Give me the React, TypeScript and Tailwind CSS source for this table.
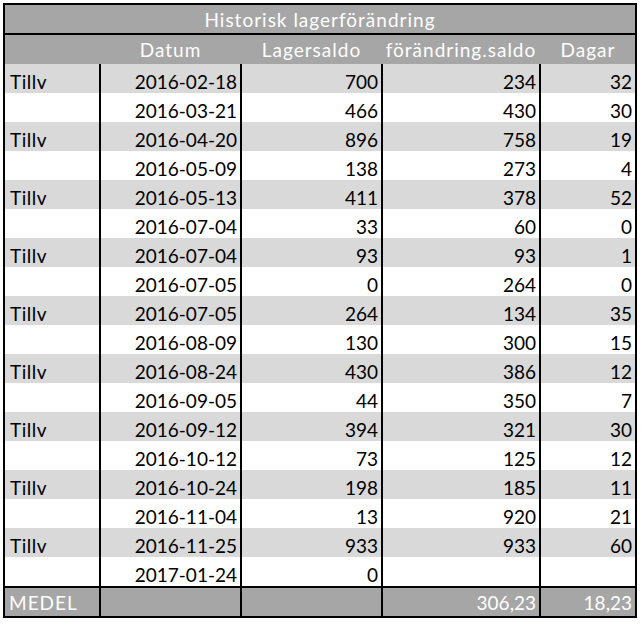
const rows: [string, string, string, string, string][] = [
  ['Tillv', '2016-02-18', '700', '234', '32'],
  ['', '2016-03-21', '466', '430', '30'],
  ['Tillv', '2016-04-20', '896', '758', '19'],
  ['', '2016-05-09', '138', '273', '4'],
  ['Tillv', '2016-05-13', '411', '378', '52'],
  ['', '2016-07-04', '33', '60', '0'],
  ['Tillv', '2016-07-04', '93', '93', '1'],
  ['', '2016-07-05', '0', '264', '0'],
  ['Tillv', '2016-07-05', '264', '134', '35'],
  ['', '2016-08-09', '130', '300', '15'],
  ['Tillv', '2016-08-24', '430', '386', '12'],
  ['', '2016-09-05', '44', '350', '7'],
  ['Tillv', '2016-09-12', '394', '321', '30'],
  ['', '2016-10-12', '73', '125', '12'],
  ['Tillv', '2016-10-24', '198', '185', '11'],
  ['', '2016-11-04', '13', '920', '21'],
  ['Tillv', '2016-11-25', '933', '933', '60'],
  ['', '2017-01-24', '0', '', ''],
];

const grid = 'grid grid-cols-[96px_141px_141px_158px_94px]';

export default function App() {
  return (
    <div className="min-h-screen bg-white pl-[3px] pt-[3px] font-['Lato',sans-serif] text-[19px]">
      <div className="w-[634px] border-2 border-black">
        <div className="h-[30px] border-b-2 border-black bg-[#a6a6a6] pt-[3px] text-center leading-[23px] tracking-[1px] text-white">
          Historisk lagerförändring
        </div>

        <div className={`${grid} h-[29px] bg-[#a6a6a6] text-center leading-[23px] tracking-[1px] text-white`}>
          <div className="border-r-2 border-transparent pt-[3px]" />
          <div className="border-r-2 border-transparent pt-[3px]">Datum</div>
          <div className="border-r-2 border-transparent pt-[3px]">Lagersaldo</div>
          <div className="border-r-2 border-transparent pt-[3px]">förändring.saldo</div>
          <div className="pt-[3px]">Dagar</div>
        </div>

        {rows.map((r, i) => (
          <div
            key={i}
            className={`${grid} h-[29px] leading-[23px] text-black ${i % 2 === 0 ? 'bg-[#d9d9d9]' : 'bg-white'}`}
          >
            <div className="border-r-2 border-black pl-[5px] pt-[6px] tracking-[0.5px]">{r[0]}</div>
            <div className="border-r-2 border-black pr-[3px] pt-[6px] text-right">{r[1]}</div>
            <div className="border-r-2 border-black pr-[3px] pt-[6px] text-right">{r[2]}</div>
            <div className="border-r-2 border-black pr-[3px] pt-[6px] text-right">{r[3]}</div>
            <div className="pr-[3px] pt-[6px] text-right">{r[4]}</div>
          </div>
        ))}

        <div className={`${grid} h-[30px] border-t-2 border-black bg-[#a6a6a6] leading-[23px] text-white`}>
          <div className="border-r-2 border-black pl-[4px] pt-[3px] tracking-[1px]">MEDEL</div>
          <div className="border-r-2 border-black" />
          <div className="border-r-2 border-black" />
          <div className="border-r-2 border-black pr-[3px] pt-[3px] text-right">306,23</div>
          <div className="pr-[3px] pt-[3px] text-right">18,23</div>
        </div>
      </div>
    </div>
  );
}
